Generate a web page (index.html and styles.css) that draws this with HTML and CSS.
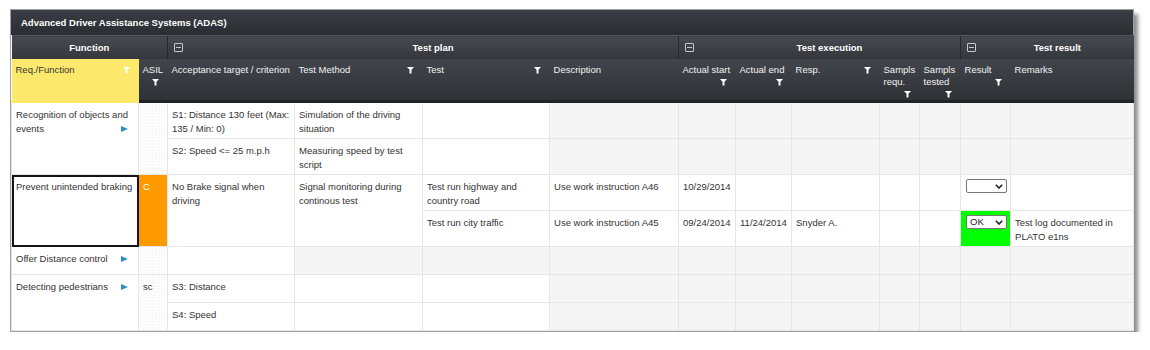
FILE: index.html
```html
<!DOCTYPE html>
<html lang="en">
<head>
    <meta charset="UTF-8">
    <title>ADAS</title>
    <link rel="stylesheet" href="styles.css">
</head>
<body>
    <div class="panel">
        <div class="title">Advanced Driver Assistance Systems (ADAS)</div>
        <table class="grid">
            <colgroup>
                <col style="width:127px"><col style="width:29px"><col style="width:127px"><col style="width:128px">
                <col style="width:127px"><col style="width:129px"><col style="width:57px"><col style="width:56px">
                <col style="width:88px"><col style="width:40px"><col style="width:41px"><col style="width:50px">
                <col style="width:123px">
            </colgroup>
            <tr class="groups">
                <th colspan="2"><div class="grp"><span class="grp-title">Function</span></div></th>
                <th colspan="4"><div class="grp"><span class="toggle"></span><span class="grp-title">Test plan</span></div></th>
                <th colspan="5"><div class="grp"><span class="toggle"></span><span class="grp-title">Test execution</span></div></th>
                <th colspan="2"><div class="grp"><span class="toggle"></span><span class="grp-title">Test result</span></div></th>
            </tr>
            <tr class="cols">
                <th class="req"><div class="hd">Req./Function <span class="funnel"></span></div></th>
                <th><div>ASIL</div><div class="under"><span class="funnel"></span></div></th>
                <th><div>Acceptance target / criterion</div></th>
                <th><div class="hd">Test Method <span class="funnel"></span></div></th>
                <th><div class="hd">Test <span class="funnel"></span></div></th>
                <th><div>Description</div></th>
                <th><div>Actual start</div><div class="under"><span class="funnel"></span></div></th>
                <th><div>Actual end</div><div class="under"><span class="funnel"></span></div></th>
                <th><div class="hd">Resp. <span class="funnel"></span></div></th>
                <th><div>Sampls requ.</div><div class="under"><span class="funnel"></span></div></th>
                <th><div>Sampls tested</div><div class="under"><span class="funnel"></span></div></th>
                <th><div>Result</div><div class="under"><span class="funnel"></span></div></th>
                <th><div>Remarks</div></th>
            </tr>
            <tr>
                <td rowspan="2">Recognition of objects and events<span class="arrow"></span></td>
                <td rowspan="2" class="dots"></td>
                <td>S1: Distance 130 feet (Max: 135 / Min: 0)</td>
                <td>Simulation of the driving situation</td>
                <td></td>
                <td class="ro"></td><td class="ro"></td><td class="ro"></td><td class="ro"></td>
                <td class="ro"></td><td class="ro"></td><td class="ro"></td><td class="ro"></td>
            </tr>
            <tr>
                <td>S2: Speed &lt;= 25 m.p.h</td>
                <td>Measuring speed by test script</td>
                <td></td>
                <td class="ro"></td><td class="ro"></td><td class="ro"></td><td class="ro"></td>
                <td class="ro"></td><td class="ro"></td><td class="ro"></td><td class="ro"></td>
            </tr>
            <tr>
                <td rowspan="2" class="selected">Prevent unintended braking</td>
                <td rowspan="2" class="asil-c">C</td>
                <td rowspan="2">No Brake signal when driving</td>
                <td rowspan="2">Signal monitoring during continous test</td>
                <td>Test run highway and country road</td>
                <td>Use work instruction A46</td>
                <td>10/29/2014</td>
                <td></td><td></td><td></td><td></td>
                <td class="result"><div class="pick"><span></span><svg width="8" height="5" viewBox="0 0 8 5"><path d="M0.8 0.8 L4 4 L7.2 0.8" fill="none" stroke="#222" stroke-width="1.6"/></svg></div></td>
                <td></td>
            </tr>
            <tr>
                <td>Test run city traffic</td>
                <td>Use work instruction A45</td>
                <td>09/24/2014</td>
                <td>11/24/2014</td>
                <td>Snyder A.</td>
                <td></td><td></td>
                <td class="result ok"><div class="pick"><span>OK</span><svg width="8" height="5" viewBox="0 0 8 5"><path d="M0.8 0.8 L4 4 L7.2 0.8" fill="none" stroke="#222" stroke-width="1.6"/></svg></div></td>
                <td>Test log documented in PLATO e1ns</td>
            </tr>
            <tr class="short">
                <td>Offer Distance control<span class="arrow"></span></td>
                <td class="dots"></td>
                <td></td>
                <td class="ro"></td><td class="ro"></td><td class="ro"></td><td class="ro"></td><td class="ro"></td>
                <td class="ro"></td><td class="ro"></td><td class="ro"></td><td class="ro"></td><td class="ro"></td>
            </tr>
            <tr class="short">
                <td rowspan="2">Detecting pedestrians<span class="arrow"></span></td>
                <td rowspan="2" class="dots">sc</td>
                <td>S3: Distance</td>
                <td></td><td></td>
                <td class="ro"></td><td class="ro"></td><td class="ro"></td><td class="ro"></td>
                <td class="ro"></td><td class="ro"></td><td class="ro"></td><td class="ro"></td>
            </tr>
            <tr class="short">
                <td>S4: Speed</td>
                <td></td><td></td>
                <td class="ro"></td><td class="ro"></td><td class="ro"></td><td class="ro"></td>
                <td class="ro"></td><td class="ro"></td><td class="ro"></td><td class="ro"></td>
            </tr>
        </table>
    </div>
</body>
</html>
```
FILE: styles.css
```css
html, body {
    margin: 0;
    background: #fff;
    font-family: "Liberation Sans", Arial, sans-serif;
    font-size: 9.5px;
    color: #333;
}
.panel {
    margin: 9px 0 0 10px;
    width: 1122px;
    border: 1px solid #a0a0a0;
    background: #fff;
    box-shadow: 4px 5px 4px rgba(0, 0, 0, 0.45);
}
.title {
    height: 25px;
    display: flex;
    align-items: center;
    padding-left: 10px;
    color: #fff;
    font-weight: bold;
    background: linear-gradient(#3a3e44, #2a2d32);
}
.grid {
    width: 1122px;
    table-layout: fixed;
    border-collapse: collapse;
}
.groups th {
    height: 23px;
    padding: 0;
    color: #fff;
    font-weight: bold;
    background: linear-gradient(#474b51, #33363b);
    border-top: 1px solid #55595f;
    border-left: 1px solid #24272b;
}
.groups th:first-child {
    border-left: none;
}
.grp {
    display: flex;
    align-items: center;
}
.grp-title {
    flex: 1;
    text-align: center;
}
.toggle {
    width: 20px;
    height: 9px;
    position: relative;
}
.toggle::before {
    content: "";
    position: absolute;
    left: 6px;
    top: 0;
    width: 7px;
    height: 7px;
    border: 1px solid #c8c8c8;
    border-radius: 1px;
}
.toggle::after {
    content: "";
    position: absolute;
    left: 8px;
    top: 4px;
    width: 5px;
    height: 1px;
    background: #c8c8c8;
}
.cols th {
    height: 36px;
    padding: 5px 1px 0 4px;
    vertical-align: top;
    text-align: left;
    font-weight: normal;
    line-height: 12px;
    color: #f2f2f2;
    background: linear-gradient(#42464c, #2e3136);
    border-bottom: 3px solid #202327;
    white-space: normal;
}
.cols th.req {
    color: #333;
    background: #fce96c;
    border-bottom-color: #fce96c;
}
.hd {
    display: flex;
    justify-content: space-between;
    align-items: center;
}
.under {
    display: flex;
    justify-content: flex-end;
    height: 12px;
    align-items: center;
}
.funnel {
    display: inline-block;
    flex: none;
    width: 8px;
    height: 7px;
    margin-right: 7px;
    background: #fff;
    clip-path: polygon(0 0, 100% 0, 62% 45%, 62% 100%, 38% 100%, 38% 45%);
}
td {
    padding: 5px 4px 2px;
    height: 28px;
    vertical-align: top;
    line-height: 14px;
    background: #fff;
    border: 1px solid #e6e6e6;
    overflow: hidden;
}
tr.short td {
    height: 20px;
}
td.ro {
    background: #f5f5f5;
}
td.dots {
    background-color: #fff;
    background-image: radial-gradient(#e2e2e2 0.7px, transparent 0.9px);
    background-size: 3px 3px;
}
td.asil-c {
    background: #ff9900;
    color: #fff;
}
td.selected {
    outline: 2px solid #151515;
    outline-offset: -2px;
}
.arrow {
    float: right;
    width: 0;
    height: 0;
    margin: 4px 6px 0 0;
    border-left: 7px solid #2a8dc5;
    border-top: 3.5px solid transparent;
    border-bottom: 3.5px solid transparent;
}
td.result {
    padding: 4px 4px 2px 5px;
}
td.ok {
    background: #00ff00;
}
.pick {
    display: flex;
    align-items: center;
    justify-content: space-between;
    box-sizing: border-box;
    width: 41px;
    height: 14px;
    padding: 0 3px;
    border: 1px solid #777;
    border-radius: 2px;
    background: #fff;
    color: #222;
    font-size: 9.5px;
    line-height: 12px;
}
```
